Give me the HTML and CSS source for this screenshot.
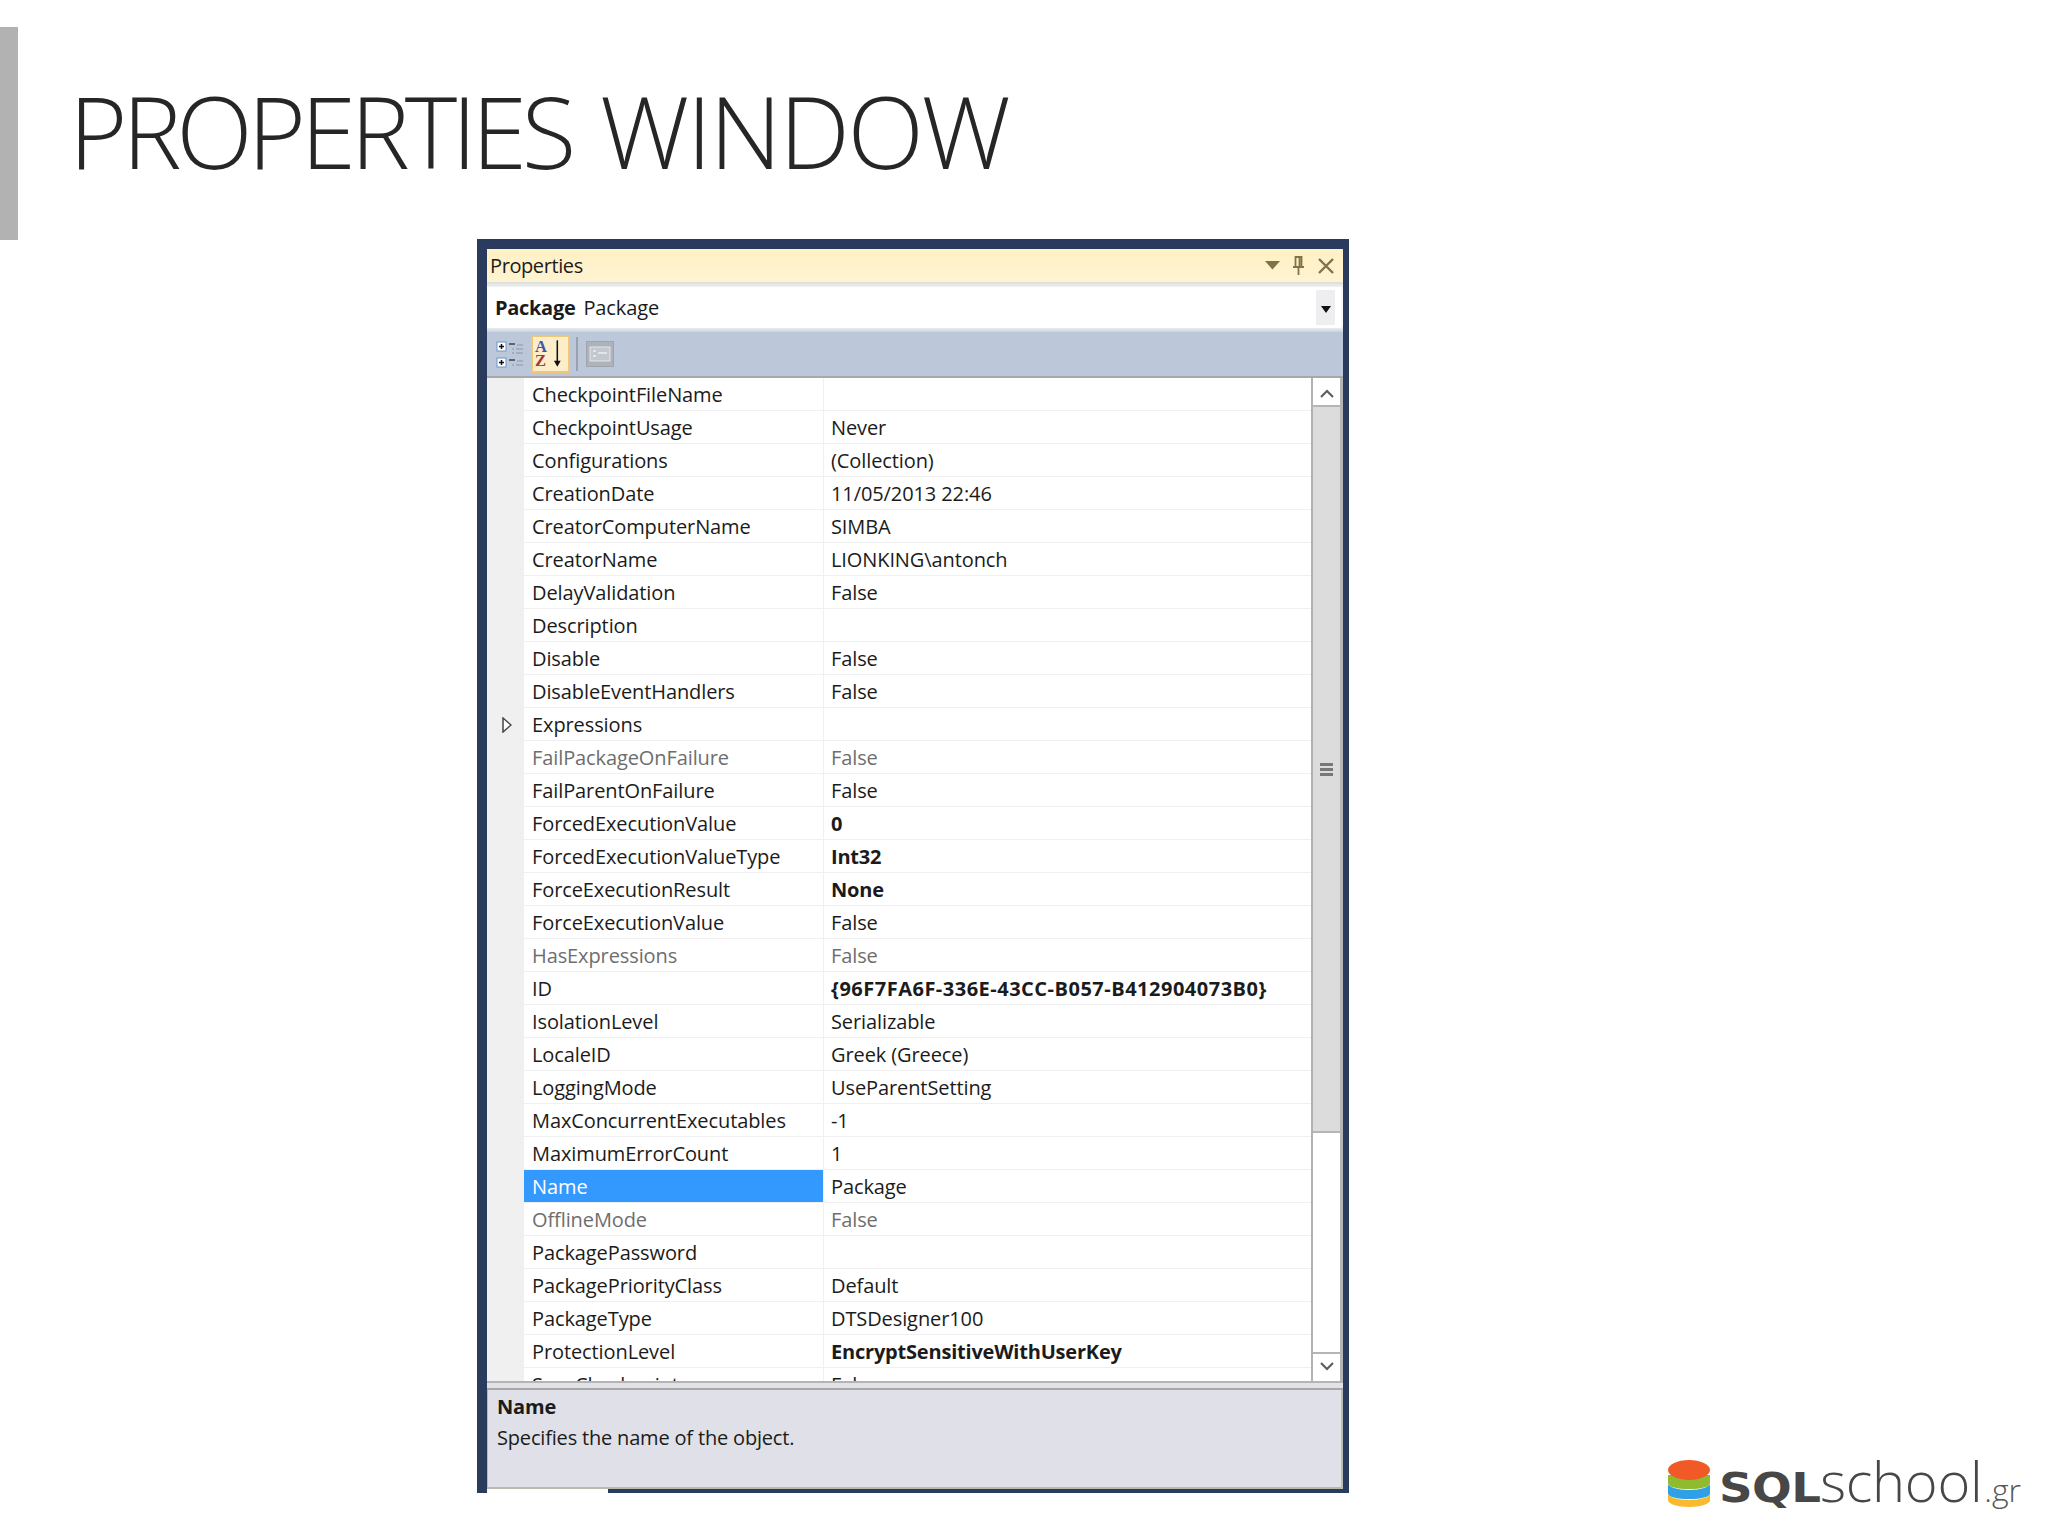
FILE: index.html
```html
<!DOCTYPE html>
<html lang="en">
<head>
<meta charset="utf-8">
<title>Properties Window</title>
<link rel="stylesheet" href="styles.css">
</head>
<body>
<main class="slide">
  <header class="slide-head">
    <div class="accent"></div>
    <h1 class="slide-title"><span class="title-first">PROPERTIES</span> <span class="title-second">WINDOW</span></h1>
  </header>
  <section class="stage">
    <div class="window">
      <div class="titlebar">
        <span class="titlebar-text">Properties</span>
        <span class="titlebar-tools">
          <svg class="ti" width="15" height="9" viewBox="0 0 15 9"><path d="M0 0h15L7.500 8.500z" fill="#7d7448"/></svg>
          <svg class="ti" width="13" height="20" viewBox="0 0 13 20"><path d="M3.500 1h6v10h-6zM7.500 1v10M1 11h11M6.500 11v8" fill="none" stroke="#7d7448" stroke-width="1.800"/></svg>
          <svg class="ti" width="18" height="18" viewBox="0 0 18 18"><path d="M2 2l14 14M16 2L2 16" fill="none" stroke="#7d7448" stroke-width="2.400"/></svg>
        </span>
      </div>
      <div class="combo-wrap">
        <div class="combo">
          <span class="combo-text"><b>Package</b><span class="combo-type">Package</span></span>
          <span class="combo-btn"><svg width="10" height="7" viewBox="0 0 10 7"><path d="M0 0h10L5 7z" fill="#111"/></svg></span>
        </div>
      </div>
      <div class="toolbar">
        <span class="tool">
          <svg width="30" height="30" viewBox="0 0 30 30">
            <rect x="1" y="3" width="9" height="9" fill="#fff" stroke="#6f94c8"/><path d="M3 7.500h5M5.500 5v5" stroke="#111" stroke-width="1.500"/>
            <rect x="1" y="19" width="9" height="9" fill="#fff" stroke="#6f94c8"/><path d="M3 23.500h5M5.500 21v5" stroke="#111" stroke-width="1.500"/>
            <path d="M13 5h6M13 21h6" stroke="#56667e" stroke-width="2"/>
            <path d="M21 6h6M16 10h2M20 10h7M16 14h2M20 14h7M21 22h6M20 26h7M16 26h2" stroke="#8b95a6" stroke-width="1.200"/>
          </svg>
        </span>
        <span class="tool tool-active">
          <svg width="36" height="36" viewBox="0 0 36 36">
            <text x="2" y="16" class="az az-a">A</text>
            <text x="2" y="30" class="az az-z">Z</text>
            <path d="M25 4v23" stroke="#111" stroke-width="1.600"/>
            <path d="M21.500 25h7l-3.500 6z" fill="#111"/>
          </svg>
        </span>
        <span class="tool-sep"></span>
        <span class="tool tool-off">
          <svg width="28" height="26" viewBox="0 0 28 26">
            <rect x="0.500" y="0.500" width="27" height="25" fill="#adb3bb" stroke="#a0a5ac"/>
            <rect x="4" y="6" width="20" height="14" fill="#c3c8cf" stroke="#e4e6ea"/>
            <path d="M7 10h3M7 15h3M12 12h9" stroke="#eceef1" stroke-width="1.500"/>
          </svg>
        </span>
      </div>
      <div class="grid">
        <div class="rows">
          <div class="row"><span class="gutter"></span><span class="name">CheckpointFileName</span><span class="val"></span></div>
          <div class="row"><span class="gutter"></span><span class="name">CheckpointUsage</span><span class="val">Never</span></div>
          <div class="row"><span class="gutter"></span><span class="name">Configurations</span><span class="val">(Collection)</span></div>
          <div class="row"><span class="gutter"></span><span class="name">CreationDate</span><span class="val">11/05/2013 22:46</span></div>
          <div class="row"><span class="gutter"></span><span class="name">CreatorComputerName</span><span class="val">SIMBA</span></div>
          <div class="row"><span class="gutter"></span><span class="name">CreatorName</span><span class="val">LIONKING\antonch</span></div>
          <div class="row"><span class="gutter"></span><span class="name">DelayValidation</span><span class="val">False</span></div>
          <div class="row"><span class="gutter"></span><span class="name">Description</span><span class="val"></span></div>
          <div class="row"><span class="gutter"></span><span class="name">Disable</span><span class="val">False</span></div>
          <div class="row"><span class="gutter"></span><span class="name">DisableEventHandlers</span><span class="val">False</span></div>
          <div class="row"><span class="gutter gutter-arrow"><svg width="10" height="16" viewBox="0 0 10 16"><path d="M1 1l8 7-8 7z" fill="#fff" stroke="#444" stroke-width="1.500"/></svg></span><span class="name">Expressions</span><span class="val"></span></div>
          <div class="row row-muted"><span class="gutter"></span><span class="name">FailPackageOnFailure</span><span class="val">False</span></div>
          <div class="row"><span class="gutter"></span><span class="name">FailParentOnFailure</span><span class="val">False</span></div>
          <div class="row"><span class="gutter"></span><span class="name">ForcedExecutionValue</span><span class="val val-bold">0</span></div>
          <div class="row"><span class="gutter"></span><span class="name">ForcedExecutionValueType</span><span class="val val-bold">Int32</span></div>
          <div class="row"><span class="gutter"></span><span class="name">ForceExecutionResult</span><span class="val val-bold">None</span></div>
          <div class="row"><span class="gutter"></span><span class="name">ForceExecutionValue</span><span class="val">False</span></div>
          <div class="row row-muted"><span class="gutter"></span><span class="name">HasExpressions</span><span class="val">False</span></div>
          <div class="row"><span class="gutter"></span><span class="name">ID</span><span class="val val-bold val-guid">{96F7FA6F-336E-43CC-B057-B412904073B0}</span></div>
          <div class="row"><span class="gutter"></span><span class="name">IsolationLevel</span><span class="val">Serializable</span></div>
          <div class="row"><span class="gutter"></span><span class="name">LocaleID</span><span class="val">Greek (Greece)</span></div>
          <div class="row"><span class="gutter"></span><span class="name">LoggingMode</span><span class="val">UseParentSetting</span></div>
          <div class="row"><span class="gutter"></span><span class="name">MaxConcurrentExecutables</span><span class="val">-1</span></div>
          <div class="row"><span class="gutter"></span><span class="name">MaximumErrorCount</span><span class="val">1</span></div>
          <div class="row row-selected"><span class="gutter"></span><span class="name">Name</span><span class="val">Package</span></div>
          <div class="row row-muted"><span class="gutter"></span><span class="name">OfflineMode</span><span class="val">False</span></div>
          <div class="row"><span class="gutter"></span><span class="name">PackagePassword</span><span class="val"></span></div>
          <div class="row"><span class="gutter"></span><span class="name">PackagePriorityClass</span><span class="val">Default</span></div>
          <div class="row"><span class="gutter"></span><span class="name">PackageType</span><span class="val">DTSDesigner100</span></div>
          <div class="row"><span class="gutter"></span><span class="name">ProtectionLevel</span><span class="val val-bold">EncryptSensitiveWithUserKey</span></div>
          <div class="row"><span class="gutter"></span><span class="name">SaveCheckpoints</span><span class="val">False</span></div>
        </div>
        <div class="scrollbar">
          <span class="sb-btn sb-btn-up"><svg width="14" height="9" viewBox="0 0 14 9"><path d="M1 8l6-6 6 6" fill="none" stroke="#5a5a5a" stroke-width="2"/></svg></span>
          <span class="sb-thumb"><span class="grip"></span><span class="grip"></span><span class="grip"></span></span>
          <span class="sb-track"></span>
          <span class="sb-btn sb-btn-down"><svg width="14" height="9" viewBox="0 0 14 9"><path d="M1 1l6 6 6-6" fill="none" stroke="#5a5a5a" stroke-width="2"/></svg></span>
        </div>
      </div>
      <div class="splitter"></div>
      <div class="desc">
        <div class="desc-title">Name</div>
        <div class="desc-text">Specifies the name of the object.</div>
      </div>
      <span class="window-notch"></span>
    </div>
    <div class="logo">
      <svg class="logo-mark" width="44" height="48" viewBox="0 0 44 48">
        <path d="M1 34v6c0 4 9 7 21 7s21-3 21-7v-6z" fill="#fbb92d"/>
        <path d="M1 24v9c0 4 9 7 21 7s21-3 21-7v-9z" fill="#fff"/>
        <path d="M1 25v8c0 4 9 6 21 6s21-2 21-6v-8z" fill="#2f9fe6"/>
        <path d="M1 14v9c0 4 9 7 21 7s21-3 21-7v-9z" fill="#fff"/>
        <path d="M1 15v8c0 4 9 6 21 6s21-2 21-6v-8z" fill="#8fbc2f"/>
        <ellipse cx="22" cy="10" rx="21" ry="10" fill="#f15a27"/>
      </svg>
      <span class="logo-text"><span class="logo-sql">SQL</span><span class="logo-school">school</span><span class="logo-gr">.gr</span></span>
    </div>
  </section>
</main>
</body>
</html>
```
FILE: styles.css
```css
* { box-sizing: border-box; }
html, body { margin: 0; padding: 0; background: #fff; }
.slide {
  width: 2048px;
  height: 1536px;
  overflow: hidden;
  display: flex;
  flex-direction: column;
  font-family: "Open Sans", "Liberation Sans", sans-serif;
}
.slide-head {
  display: flex;
  margin-top: 27px;
  height: 212px;
  flex: none;
}
.accent { width: 18px; height: 213px; background: #b2b2b2; flex: none; }
.slide-title {
  margin: 35px 0 0 51px;
  font-weight: 300;
  font-size: 100px;
  line-height: 136px;
  word-spacing: 3px;
  color: #262626;
  white-space: nowrap;
}
.title-first { letter-spacing: -5.3px; }
.title-second { letter-spacing: -2.4px; }
.stage {
  flex: 1;
  display: flex;
  align-items: flex-end;
  min-height: 0;
}
.window {
  position: relative;
  flex: none;
  width: 872px;
  height: 1254px;
  margin: 0 0 43px 477px;
  border-style: solid;
  border-color: #2a3b5e;
  border-width: 10px 6px 4px 10px;
  display: flex;
  flex-direction: column;
  background: #dfe0e8;
  font-size: 20px;
  letter-spacing: -0.1px;
  color: #1b1b1b;
}
.window-notch {
  position: absolute;
  left: 0;
  bottom: -4px;
  width: 121px;
  height: 4px;
  background: #fff;
}
.titlebar {
  flex: none;
  height: 33px;
  background: linear-gradient(#fff0c4, #fff4d2);
  display: flex;
  align-items: center;
  justify-content: space-between;
  padding: 0 8px 0 3px;
  border-top-right-radius: 3px;
}
.titlebar-text { line-height: 33px; letter-spacing: -0.4px; }
.titlebar-tools { display: flex; align-items: center; gap: 12px; }
.ti { display: block; }
.combo-wrap {
  flex: none;
  height: 50px;
  padding: 5px 2px 4px 0;
  background: linear-gradient(#d9dcd8, #f6f7f8 6px, #f6f7f8 44px, #ccd3df);
}
.combo {
  height: 41px;
  background: #fff;
  display: flex;
  align-items: center;
  justify-content: space-between;
  padding: 0 6px 0 8px;
}
.combo-text b { font-weight: 700; letter-spacing: -0.3px; }
.combo-type { margin-left: 8px; }
.combo-btn {
  width: 19px;
  height: 35px;
  padding-top: 3px;
  background: #eeeef0;
  display: flex;
  align-items: center;
  justify-content: center;
}
.toolbar {
  flex: none;
  height: 46px;
  background: #bcc7d9;
  border-bottom: 2px solid #a6a8ad;
  display: flex;
  align-items: center;
  padding-left: 9px;
}
.tool { display: flex; align-items: center; justify-content: center; }
.tool-active {
  width: 39px;
  height: 38px;
  margin-left: 5px;
  background: #fbeec9;
  border: 2px solid #f0c777;
}
.tool-sep { width: 2px; height: 34px; background: #9aa2ae; margin: 0 8px 0 6px; }
.az { font-family: "Liberation Serif", serif; font-weight: 700; font-size: 17px; }
.az-a { fill: #3a55b0; }
.az-z { fill: #a33a3a; }
.grid {
  flex: none;
  height: 1003px;
  display: flex;
  background: #fff;
}
.rows { flex: none; width: 824px; overflow: hidden; }
.row {
  display: flex;
  height: 33px;
  line-height: 34px;
  border-bottom: 1px solid #f0f0f2;
  white-space: nowrap;
}
.gutter {
  flex: none;
  width: 37px;
  background: #f0f0f0;
  display: flex;
  align-items: center;
  justify-content: center;
  margin-bottom: -1px;
}
.gutter-arrow { padding-left: 3px; }
.name {
  flex: none;
  width: 300px;
  padding-left: 8px;
  border-right: 1px solid #f0f0f2;
}
.val { flex: 1; padding-left: 7px; }
.val-bold { font-weight: 700; letter-spacing: -0.2px; }
.val-guid { letter-spacing: 0.5px; }
.row-muted { color: #6e6e6e; }
.row-selected .name { background: #3399ff; color: #fff; }
.scrollbar {
  flex: none;
  width: 32px;
  display: flex;
  flex-direction: column;
  border-left: 2px solid #b2b2b2;
  border-right: 3px solid #b5b5b5;
}
.sb-btn {
  flex: none;
  height: 29px;
  background: #fff;
  border-bottom: 2px solid #b5b5b5;
  display: flex;
  align-items: center;
  justify-content: center;
}
.sb-btn-up { padding-top: 3px; }
.sb-btn-down { border-bottom: 0; border-top: 2px solid #b5b5b5; padding-bottom: 2px; }
.sb-thumb {
  flex: none;
  height: 726px;
  background: #dcdcdc;
  border-bottom: 2px solid #b5b5b5;
  display: flex;
  flex-direction: column;
  align-items: center;
  justify-content: center;
  gap: 2px;
}
.grip { width: 13px; height: 3px; background: #777; }
.sb-track { flex: 1; background: #fff; }
.splitter {
  flex: none;
  height: 9px;
  background: #e2e2e6;
  border-top: 2px solid #b4b4b4;
  border-bottom: 2px solid #a8a8a8;
}
.desc {
  flex: 1;
  padding: 2px 0 0 9px;
  background: #dfe0e8;
  border-right: 2px solid #bdbdb4;
  border-bottom: 2px solid #b9b9b0;
  border-left: 1px solid #b9b9b9;
}
.desc-title { font-weight: 700; line-height: 30px; letter-spacing: -0.2px; }
.desc-text { line-height: 32px; letter-spacing: -0.18px; }
.logo {
  display: flex;
  align-items: flex-end;
  margin: 0 0 28px 318px;
  flex: none;
}
.logo-mark { display: block; flex: none; }
.logo-text {
  display: flex;
  align-items: baseline;
  margin-left: 8px;
  height: 56px;
  color: #474747;
  line-height: 56px;
}
.logo-sql {
  font-family: "DejaVu Sans", sans-serif;
  font-weight: 700;
  font-size: 41px;
  letter-spacing: -0.5px;
  transform: scaleX(1.14);
  transform-origin: left center;
  margin-right: 12px;
}
.logo-school { font-weight: 300; font-size: 56px; letter-spacing: -0.3px; }
.logo-gr { font-weight: 300; font-size: 32px; margin-left: 2px; color: #555; }
```
